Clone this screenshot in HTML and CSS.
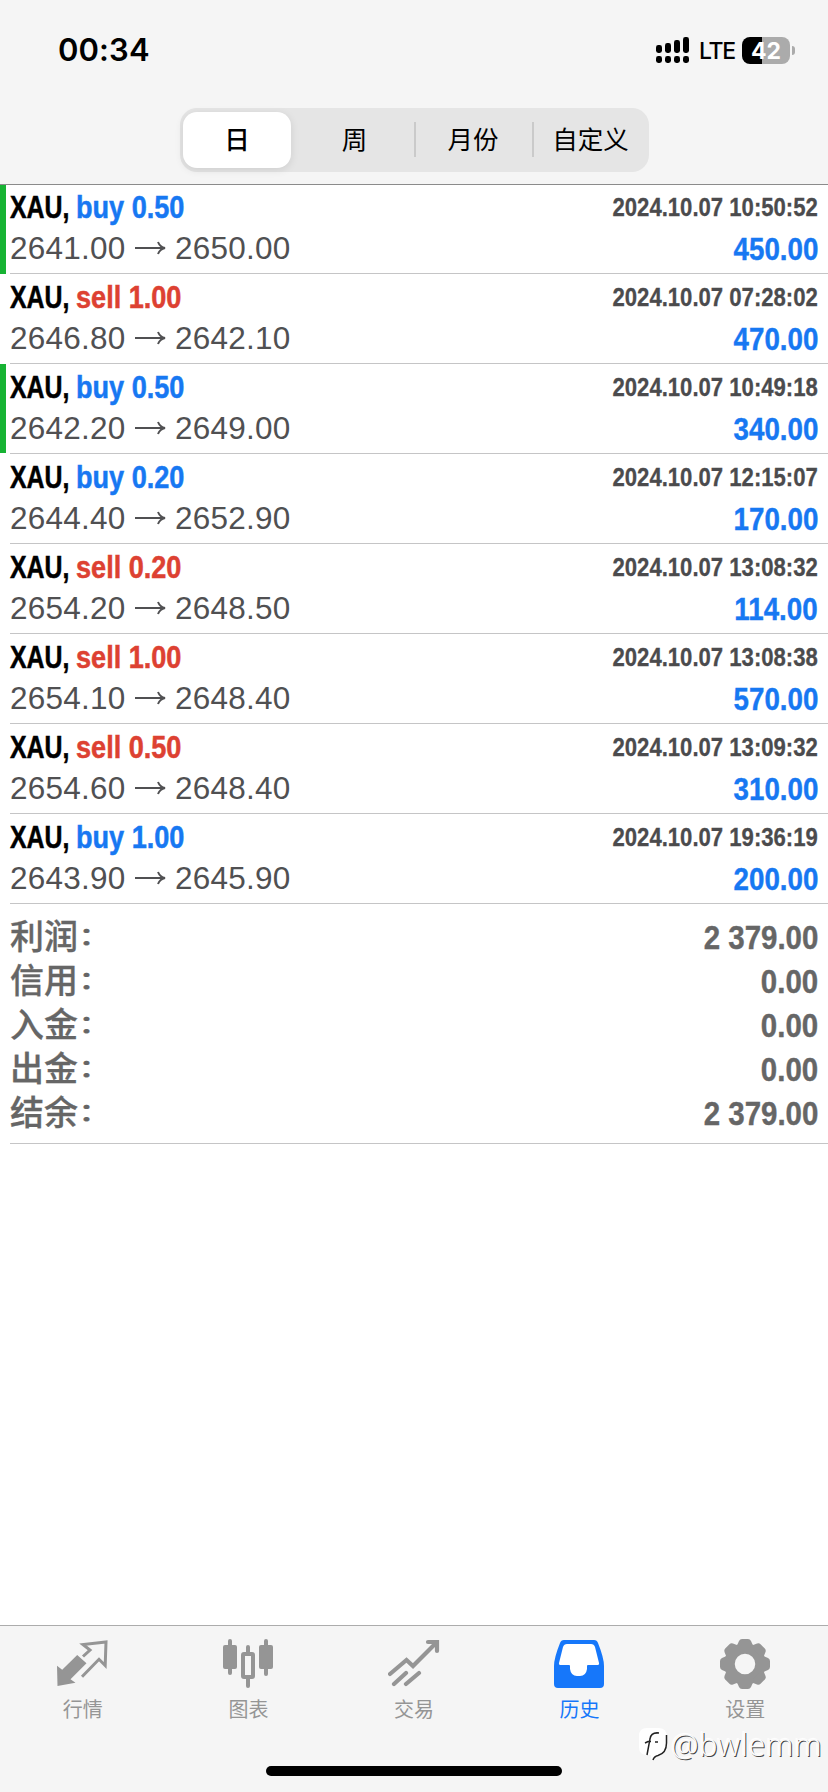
FILE: index.html
```html
<!DOCTYPE html>
<html lang="zh-CN">
<head>
<meta charset="utf-8">
<title>历史</title>
<link rel="stylesheet" href="styles.css">
</head>
<body>
<div class="app">
  <header class="header">
    <div class="status">
      <div class="clock">00:34</div>
      <div class="indicators">
        <svg class="signal" width="34" height="28" viewBox="0 0 34 28">
          <rect x="0" y="9" width="6" height="8" rx="2.4"/><rect x="9" y="7" width="6" height="10" rx="2.4"/><rect x="18" y="4" width="6" height="13" rx="2.4"/><rect x="27" y="1" width="6" height="16" rx="2.4"/>
          <rect x="0" y="20" width="6" height="7" rx="2.4"/><rect x="9" y="20" width="6" height="7" rx="2.4"/><rect x="18" y="20" width="6" height="7" rx="2.4"/><rect x="27" y="20" width="6" height="7" rx="2.4"/>
        </svg>
        <span class="network">LTE</span>
        <span class="battery">42</span>
        <span class="battery-tip"></span>
      </div>
    </div>
    <nav class="segments">
      <span class="segment selected">日</span>
      <span class="segment week">周</span>
      <span class="segment divided">月份</span>
      <span class="segment divided">自定义</span>
    </nav>
  </header>

  <main class="history">
    <div class="deals" id="deals"></div>
    <section class="summary">
      <div class="sum-row"><span class="label">利润<i class="colon">：</i></span><b class="num">2 379.00</b></div>
      <div class="sum-row"><span class="label">信用<i class="colon">：</i></span><b class="num">0.00</b></div>
      <div class="sum-row"><span class="label">入金<i class="colon">：</i></span><b class="num">0.00</b></div>
      <div class="sum-row"><span class="label">出金<i class="colon">：</i></span><b class="num">0.00</b></div>
      <div class="sum-row"><span class="label">结余<i class="colon">：</i></span><b class="num">2 379.00</b></div>
    </section>
  </main>

  <footer class="tabbar">
    <nav class="tabs">
      <div class="tab">
        <svg width="52" height="52" viewBox="0 0 52 52">
          <path d="M0 27.700L5.200 31.700L20.200 17L29.500 25.300L13.500 41.300L18.500 44.800L0.500 48Z" fill="currentColor"/>
          <path d="M26 18.500L33 12L26 6.500L49 4L48.200 27.500L42 21.300L25 38.700" fill="none" stroke="currentColor" stroke-width="3"/>
        </svg>
        <span>行情</span>
      </div>
      <div class="tab">
        <svg width="52" height="52" viewBox="0 0 52 52" fill="currentColor">
          <rect x="6" y="1" width="4" height="36" rx="2"/><rect x="1" y="7" width="14" height="24" rx="2"/>
          <rect x="42" y="1" width="4" height="37" rx="2"/><rect x="37" y="7" width="14" height="24" rx="2"/>
          <rect x="24" y="7" width="4" height="9" rx="2"/><rect x="24" y="38" width="4" height="12" rx="2"/>
          <rect x="21" y="16" width="10" height="23" rx="1" fill="none" stroke="currentColor" stroke-width="4"/>
        </svg>
        <span>图表</span>
      </div>
      <div class="tab">
        <svg width="52" height="52" viewBox="0 0 52 52" fill="none" stroke="currentColor" stroke-width="4.200" stroke-linecap="round">
          <path d="M2 36L18.500 22L25 28L47 6M6 46L18 35M18 46L31 35"/>
          <path d="M40 4H49V13"/><path d="M43 3H50V10Z" fill="currentColor" stroke="none"/>
        </svg>
        <span>交易</span>
      </div>
      <div class="tab active">
        <svg width="52" height="52" viewBox="1 0 52 52">
          <path d="M11 2H41Q44 2 45 5Q51 20 51 28V46Q51 50 47 50H5Q1 50 1 46V28Q1 20 7 5Q8 2 11 2Z" fill="currentColor"/>
          <path d="M14 6H38Q41 6 42 9L46 25Q46.500 27 44 27H35Q34 27 34 28V31Q33 38 27 38H24Q18 38 17 31V28Q17 27 16 27H8Q5.500 27 6 25L10 9Q11 6 14 6Z" fill="#fff"/>
        </svg>
        <span>历史</span>
      </div>
      <div class="tab">
        <svg width="52" height="52" viewBox="-26 -26 52 52" fill="currentColor">
          <defs><path id="tooth" d="M-9 -16L-6 -23Q-5 -25 -3 -25H3Q5 -25 6 -23L9 -16Z"/></defs>
          <circle r="15.500" fill="none" stroke="currentColor" stroke-width="10.500"/>
          <use href="#tooth"/><use href="#tooth" transform="rotate(45)"/><use href="#tooth" transform="rotate(90)"/><use href="#tooth" transform="rotate(135)"/><use href="#tooth" transform="rotate(180)"/><use href="#tooth" transform="rotate(225)"/><use href="#tooth" transform="rotate(270)"/><use href="#tooth" transform="rotate(315)"/>
        </svg>
        <span>设置</span>
      </div>
    </nav>
    <div class="home-bar"></div>
    <div class="watermark">
      <svg width="32" height="34" viewBox="0 0 32 34">
        <path d="M9 1H21Q29 1 29 11V17Q29 27 19 28L13 33V28H9Q1 28 1 20V9Q1 1 9 1Z" fill="#fff"/>
        <path d="M28.500 8V16Q28.500 26 20 28.500Q16 29.500 15 33M21 6Q13 5 12 12L9 28M7 16L10 14.500H13M17 15H20" fill="none" stroke="#222" stroke-width="1.500"/>
      </svg>
      <span>@bwlemm</span>
    </div>
  </footer>
</div>
<script src="app.js"></script>
</body>
</html>
```

FILE: styles.css
```css
* { box-sizing: border-box; }
body {
  margin: 0;
  background: #fff;
  font-family: "Liberation Sans", "Noto Sans CJK SC", sans-serif;
  color: #000;
}
.app { display: flex; flex-direction: column; width: 828px; height: 1792px; overflow: hidden; }

.header { flex: none; height: 185px; background: #f5f5f5; border-bottom: 1px solid #8b8b8b; }
.status { display: flex; justify-content: space-between; height: 108px; padding: 35px 33px 0 58px; }
.clock { font: 600 31px/30px Inter, sans-serif; letter-spacing: 0.100px; }
.indicators { display: flex; align-items: center; height: 30px; }
.network { margin: 2px 0 0 9px; width: 37px; font: 500 23px/28px Inter, sans-serif; letter-spacing: -1.300px; }
.battery {
  width: 48px; height: 27px; margin-left: 6px; border-radius: 8px;
  background: linear-gradient(90deg, #000 42%, #ababab 42%);
  color: #fff; text-align: center; font: 700 23px/28px Inter, sans-serif;
}
.battery-tip { width: 3px; height: 9px; margin-left: 2px; border-radius: 0 4px 4px 0; background: #ababab; }

.segments {
  display: grid; grid-template-columns: 111px 123px 118px 117px;
  width: 469px; height: 64px; margin-left: 180px; border-radius: 17px; background: #e5e5e5;
}
.segment {
  display: flex; align-items: center; justify-content: center; padding-bottom: 4px;
  font: 400 25.500px/36px "Noto Sans CJK SC", sans-serif;
}
.segment.selected {
  margin: 4px 0 4px 3px; border-radius: 14px; background: #fff; font-weight: 500;
  box-shadow: 0 2px 8px rgba(0, 0, 0, 0.1);
}
.segment.week { padding-left: 4px; }
.segment.divided { background: linear-gradient(#cacaca, #cacaca) 0 14px / 2px 35px no-repeat; }

.history { flex: 1; }
.deal { display: flex; height: 90px; padding-left: 10px; }
.deal:first-child { height: 89px; }
.deal:first-child .deal-body { padding-top: 4px; }
.deal.marked { background: linear-gradient(#17b333, #17b333) 0 0 / 6px 89px no-repeat; }
.deal-body {
  flex: 1; display: grid; grid-template-columns: 1fr auto; grid-template-rows: 36px 44px;
  row-gap: 1px; padding: 5px 10px 0 0; border-bottom: 1px solid #c5c5c6;
}
.title { display: flex; font-weight: 700; font-size: 31.500px; line-height: 36px; white-space: nowrap; -webkit-text-stroke: 0.500px; }
.symbol { display: inline-block; width: 66px; transform: scaleX(0.79); transform-origin: left; }
.side { display: inline-block; transform: scaleX(0.86); transform-origin: left; }
.buy { color: #1778f2; }
.sell { color: #dd4132; }
.time {
  justify-self: end; font-weight: 700; font-size: 25.500px; line-height: 36px; color: #4b4b4d;
  transform: scaleX(0.867); transform-origin: right; white-space: nowrap;
  -webkit-text-stroke: 0.300px;
}
.prices { display: flex; align-items: center; font-size: 31.500px; line-height: 44px; color: #505052; }
.price { width: 125px; letter-spacing: 0.250px; }
.arrow { width: 32px; height: 16px; margin-right: 8px; }
.profit {
  justify-self: end; font-weight: 700; font-size: 31.500px; line-height: 46px; color: #1778f2;
  transform: scaleX(0.88); transform-origin: right;
  -webkit-text-stroke: 0.400px;
}

.summary { height: 240px; margin-left: 10px; padding: 10px 10px 0 0; border-bottom: 1px solid #c5c5c6; color: #666; }
.sum-row { display: flex; justify-content: space-between; height: 44px; }
.label { font: 500 34px/47px "Liberation Sans", "Noto Sans CJK SC", sans-serif; -webkit-text-stroke: 0.300px; }
.colon { display: inline-block; font-style: normal; transform: translateY(-1px) scaleY(0.75); }
.num {
  font: 700 33.500px/48px "Liberation Sans", sans-serif;
  transform: scaleX(0.88); transform-origin: right;
  -webkit-text-stroke: 0.400px;
}

.tabbar { flex: none; position: relative; height: 167px; border-top: 1px solid #acacac; background: #f5f5f5; }
.tabs { display: grid; grid-template-columns: repeat(5, 1fr); padding-top: 12px; }
.tab {
  display: flex; flex-direction: column; align-items: center; color: #959595;
  font: 400 20px/30px "Noto Sans CJK SC", sans-serif;
}
.tab span { margin-top: 4px; }
.tab.active { color: #1677fa; }
.home-bar { width: 296px; height: 10px; margin: 42px auto 0; border-radius: 5px; background: #000; }
.watermark { position: absolute; right: 6px; top: 99px; display: flex; align-items: center; }
.watermark span {
  margin-left: 1px; color: #fafafa; font: 300 31px/38px "Noto Sans", sans-serif; letter-spacing: 0.400px;
  text-shadow: 1px 1px 0 #444, -1px -1px 1px #fff;
}
```

FILE: app.js
```js
const deals = [
  ["buy", "0.50", "2024.10.07 10:50:52", "2641.00", "2650.00", "450.00", true],
  ["sell", "1.00", "2024.10.07 07:28:02", "2646.80", "2642.10", "470.00", false],
  ["buy", "0.50", "2024.10.07 10:49:18", "2642.20", "2649.00", "340.00", true],
  ["buy", "0.20", "2024.10.07 12:15:07", "2644.40", "2652.90", "170.00", false],
  ["sell", "0.20", "2024.10.07 13:08:32", "2654.20", "2648.50", "114.00", false],
  ["sell", "1.00", "2024.10.07 13:08:38", "2654.10", "2648.40", "570.00", false],
  ["sell", "0.50", "2024.10.07 13:09:32", "2654.60", "2648.40", "310.00", false],
  ["buy", "1.00", "2024.10.07 19:36:19", "2643.90", "2645.90", "200.00", false]
];

document.getElementById("deals").innerHTML = deals.map(([side, lots, time, open, close, profit, marked]) => `
  <article class="deal${marked ? " marked" : ""}">
    <div class="deal-body">
      <div class="title"><span class="symbol">XAU,</span><span class="side ${side}">${side} ${lots}</span></div>
      <div class="time">${time}</div>
      <div class="prices">
        <span class="price">${open}</span>
        <svg class="arrow" viewBox="0 0 32 16" fill="none" stroke="#505052" stroke-width="2"><path d="M0 8H29M23 2Q25 7 30 8Q25 9 23 14"/></svg>
        <span class="price">${close}</span>
      </div>
      <div class="profit">${profit}</div>
    </div>
  </article>`).join("");
```
